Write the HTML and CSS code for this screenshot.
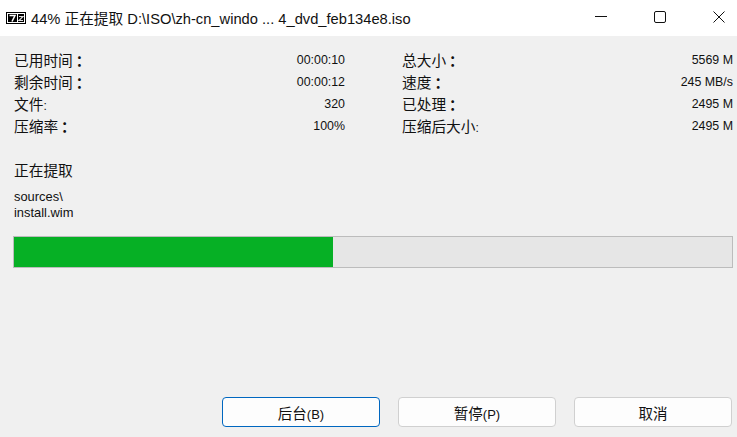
FILE: index.html
```html
<!DOCTYPE html>
<html lang="zh-CN">
<head>
    <meta charset="UTF-8">
    <meta name="viewport" content="width=device-width, initial-scale=1.0">
    <title>7-Zip</title>
    <link rel="stylesheet" href="styles.css">
</head>
<body>

<div class="window">
    <!-- Title bar -->
    <div class="titlebar">
        <svg class="app-icon" width="20" height="12" viewBox="0 0 20 12">
            <rect width="20" height="12" fill="#000"/>
            <rect x="1" y="1" width="18" height="10" fill="#fff"/>
            <rect x="2" y="2" width="9" height="8" fill="#000"/>
            <rect x="12" y="2" width="6" height="8" fill="#000"/>
            <path d="M3.5 3.5H9L6 9.5" fill="none" stroke="#fff" stroke-width="1.5"/>
            <path d="M13 4.5H17L13 8.5H17" fill="none" stroke="#ddd" stroke-width="1.1"/>
        </svg>
        <span class="title">44% 正在提取 D:\ISO\zh-cn_windo ... 4_dvd_feb134e8.iso</span>
        <div class="controls">
            <svg width="12" height="12" viewBox="0 0 12 12"><path d="M0 5.5H12" stroke="#111" fill="none"/></svg>
            <svg width="12" height="12" viewBox="0 0 12 12"><rect x="0.5" y="0.5" width="11" height="11" rx="1.5" stroke="#111" fill="none"/></svg>
            <svg width="12" height="12" viewBox="0 0 12 12"><path d="M0.5 0.5L11.5 11.5M11.5 0.5L0.5 11.5" stroke="#111" fill="none"/></svg>
        </div>
    </div>

    <div class="content">
        <!-- Stats -->
        <div class="stats">
            <div class="stat"><span class="label">已用时间<i>：</i></span><span class="value">00:00:10</span></div>
            <div class="stat"><span class="label">总大小<i>：</i></span><span class="value">5569 M</span></div>
            <div class="stat"><span class="label">剩余时间<i>：</i></span><span class="value">00:00:12</span></div>
            <div class="stat"><span class="label">速度<i>：</i></span><span class="value">245 MB/s</span></div>
            <div class="stat"><span class="label">文件<small>:</small></span><span class="value">320</span></div>
            <div class="stat"><span class="label">已处理<i>：</i></span><span class="value">2495 M</span></div>
            <div class="stat"><span class="label">压缩率<i>：</i></span><span class="value">100%</span></div>
            <div class="stat"><span class="label">压缩后大小<small>:</small></span><span class="value">2495 M</span></div>
        </div>

        <p class="status">正在提取</p>
        <p class="path">sources\<br>install.wim</p>

        <!-- Progress Bar -->
        <div class="progress-bar-container">
            <div class="progress-bar" style="width: 44.4%"></div>
        </div>

        <div class="buttons">
            <button class="default">后台<small>(B)</small></button>
            <button>暂停<small>(P)</small></button>
            <button>取消</button>
        </div>
    </div>
</div>

</body>
</html>
```

FILE: styles.css
```css
* {
    box-sizing: border-box;
    margin: 0;
    padding: 0;
}

body {
    font-family: 'Liberation Sans', 'Noto Sans CJK SC', sans-serif;
    background-color: #f0f0f0;
    color: #111;
    overflow: hidden;
}

.window {
    width: 737px;
    height: 437px;
    display: flex;
    flex-direction: column;
}

.titlebar {
    height: 36px;
    flex: none;
    background-color: #fff;
    display: flex;
    align-items: center;
    padding-left: 6px;
}

.app-icon {
    margin-right: 5px;
    margin-top: -1px;
}

.title {
    font-size: 14.7px;
    white-space: nowrap;
    margin-top: -1px;
}

.controls {
    margin-left: auto;
    display: flex;
    gap: 47px;
    padding-right: 12px;
    margin-top: -2px;
}

.content {
    flex: 1;
    display: flex;
    flex-direction: column;
    padding: 12px 4px 10px 13px;
}

.stats {
    display: grid;
    grid-template-columns: 332px 332px;
    column-gap: 56px;
    grid-auto-rows: 22px;
}

.stat {
    display: flex;
    justify-content: space-between;
    align-items: center;
    padding-left: 1px;
}

.label {
    font-size: 14.7px;
}

.label i {
    font-style: normal;
    font-weight: 700;
    margin-left: 3px;
}

.label small {
    font-size: 12px;
}

.value {
    font-size: 12.4px;
    margin-top: 1px;
}

.status {
    font-size: 14.7px;
    margin-top: 25px;
    padding-left: 1px;
    line-height: 20px;
}

.path {
    font-size: 12.9px;
    line-height: 16px;
    margin-top: 8px;
    padding-left: 1px;
}

.progress-bar-container {
    width: 720px;
    height: 32px;
    margin-top: 15px;
    background-color: #e6e6e6;
    border: 1px solid #bcbcbc;
}

.progress-bar {
    height: 100%;
    background-color: #06b025;
}

.buttons {
    margin-top: auto;
    display: flex;
    justify-content: flex-end;
    gap: 18px;
    padding-right: 1px;
}

button {
    width: 158px;
    height: 30px;
    font-family: inherit;
    font-size: 14.5px;
    color: #111;
    background-color: #fdfdfd;
    border: 1px solid #d0d0d0;
    border-radius: 4px;
}

button small {
    font-size: 13px;
}

button.default {
    border-color: #0067c0;
}
```
